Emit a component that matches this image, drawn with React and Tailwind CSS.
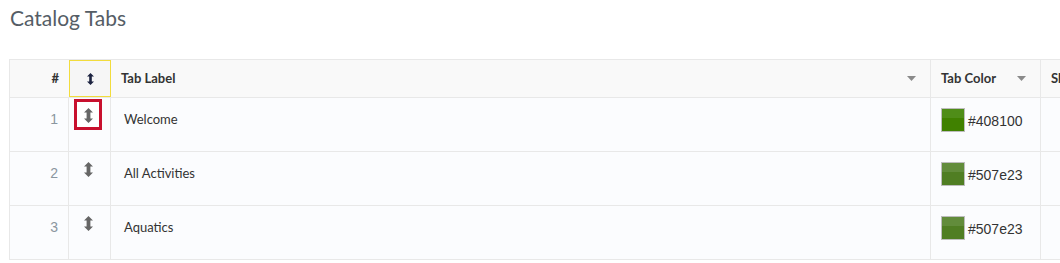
import React from 'react';

const rows = [
  { id: 1, label: 'Welcome', color: '#408100', top: '#4f8d18', focused: true },
  { id: 2, label: 'All Activities', color: '#507e23', top: '#628c3b' },
  { id: 3, label: 'Aquatics', color: '#507e23', top: '#628c3b' },
];

const Caret = () => (
  <svg width="9" height="5" viewBox="0 0 9 5" className="shrink-0">
    <path d="M0 0h9L4.5 5z" fill="#8a8a8a" />
  </svg>
);

const DragIcon = ({ small }) =>
  small ? (
    <svg width="7" height="12" viewBox="0 0 7 12">
      <path d="M3.5 0L7 3.6H4.8v4.8H7L3.5 12 0 8.4h2.2V3.6H0z" fill="#1c2340" />
    </svg>
  ) : (
    <svg width="9" height="15" viewBox="0 0 9 15">
      <path d="M4.5 0L9 4.6H6.4v5.8H9L4.5 15 0 10.4h2.6V4.6H0z" fill="#666" />
    </svg>
  );

export default function App() {
  return (
    <div className="w-[1060px] h-[263px] bg-white overflow-hidden font-['Lato','Open_Sans',sans-serif]">
      <h1 className="pl-[10px] pt-[5px] text-[21px] leading-[26px] text-[#555d66] font-normal">
        Catalog Tabs
      </h1>

      <div className="mt-[28px] ml-[9px] w-[1100px] border-t border-l border-[#e8e8e8]">
        <div className="flex h-[38px] bg-[#f9f9f9] border-b border-[#e8e8e8] text-[13px] font-bold text-[#333]">
          <div className="w-[59px] flex items-center justify-end pr-[10px]">#</div>
          <div className="w-[42px] flex items-center justify-center border border-[#f2dc3c] bg-[#f6f6f6]">
            <DragIcon small />
          </div>
          <div className="w-[820px] flex items-center justify-between pl-[10px] pr-[14px] border-r border-[#e8e8e8]">
            <span>Tab Label</span>
            <Caret />
          </div>
          <div className="w-[110px] flex items-center justify-between pl-[10px] pr-[14px] border-r border-[#e8e8e8]">
            <span>Tab Color</span>
            <Caret />
          </div>
          <div className="flex-1 flex items-center pl-[10px]">Show</div>
        </div>

        {rows.map((r) => (
          <div key={r.id} className="flex h-[54px] bg-[#fbfcfe] border-b border-[#e8e8e8] text-[13px]">
            <div className="w-[59px] pt-[11px] pr-[10px] text-right text-[14px] text-[#8a96a0] font-['Liberation_Sans',Arial,sans-serif] border-r border-[#e8e8e8]">
              {r.id}
            </div>
            <div className="w-[42px] pt-[1px] pl-[5px] border-r border-[#e8e8e8]">
              <div
                className={
                  r.focused
                    ? 'w-[28px] h-[31px] border-[3px] border-[#c8102e] bg-white flex justify-center pt-[6px]'
                    : 'w-[28px] h-[31px] flex justify-center pt-[9px]'
                }
              >
                <DragIcon />
              </div>
            </div>
            <div className="w-[820px] pt-[12px] pl-[13px] text-[#333] border-r border-[#e8e8e8]">{r.label}</div>
            <div className="w-[110px] pt-[10px] pl-[10px] flex items-start border-r border-[#e8e8e8]">
              <div
                className="w-[24px] h-[24px] border border-[#bdbdbd]"
                style={{ background: `linear-gradient(${r.top} 0 40%, ${r.color} 40% 100%)` }}
              />
              <span className="ml-[3px] mt-[3px] text-[#333] text-[14px] font-['Liberation_Sans',Arial,sans-serif]">{r.color}</span>
            </div>
            <div className="flex-1" />
          </div>
        ))}
      </div>
    </div>
  );
}
